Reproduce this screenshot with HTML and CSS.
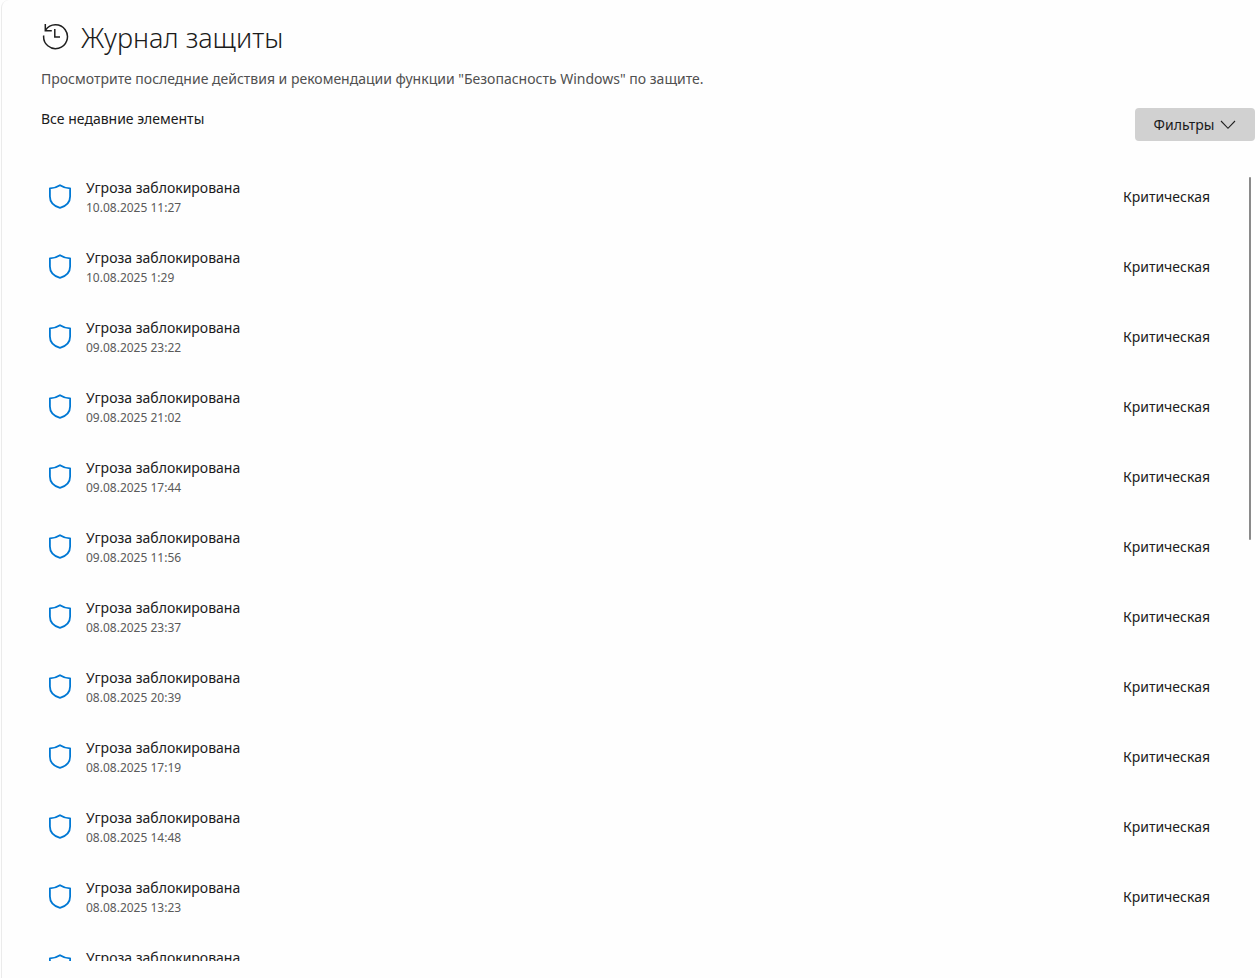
FILE: index.html
```html
<!DOCTYPE html>
<html lang="ru">
<head>
    <meta charset="UTF-8">
    <meta name="viewport" content="width=device-width, initial-scale=1.0">
    <title>Журнал защиты</title>
    <link rel="stylesheet" href="styles.css">
</head>
<body>

    <!-- Shield icon shared by all rows -->
    <svg class="sprite" aria-hidden="true">
        <symbol id="shield" viewBox="0 0 24 26">
            <path d="M12 1.200C9.500 2.900 5.800 4.100 1.900 4.300V12.500C1.900 18.300 5.500 22 12 23.900C18.500 22 22.100 18.300 22.100 12.500V4.300C18.200 4.100 14.500 2.900 12 1.200Z" fill="none" stroke="#0078d4" stroke-width="1.800" stroke-linejoin="round"/>
        </symbol>
    </svg>

    <main class="page">
        <header class="header">
            <svg class="history-icon" viewBox="0 0 28 28" aria-hidden="true">
                <path d="M2.700 13.500A11.900 11.900 0 1 0 4.600 8.200M4.300 2V8.800H10.800M13.800 7V15H19" fill="none" stroke="#1f1f1f" stroke-width="1.500"/>
            </svg>
            <h1 class="title">Журнал защиты</h1>
        </header>
        <p class="description">Просмотрите последние действия и рекомендации функции "Безопасность Windows" по защите.</p>

        <div class="toolbar">
            <h2 class="subtitle">Все недавние элементы</h2>
            <button type="button" class="filter-btn">
                Фильтры
                <svg class="chevron" viewBox="0 0 16 10" aria-hidden="true">
                    <path d="M1 1L8 8.300L15 1" fill="none" stroke="#1f1f1f" stroke-width="1.100"/>
                </svg>
            </button>
        </div>

        <div class="history">
            <ul class="list">
                <li class="item">
                    <svg class="shield"><use href="#shield"/></svg>
                    <div class="info"><span class="name">Угроза заблокирована</span><time class="date">10.08.2025 11:27</time></div>
                    <span class="level">Критическая</span>
                </li>
                <li class="item">
                    <svg class="shield"><use href="#shield"/></svg>
                    <div class="info"><span class="name">Угроза заблокирована</span><time class="date">10.08.2025 1:29</time></div>
                    <span class="level">Критическая</span>
                </li>
                <li class="item">
                    <svg class="shield"><use href="#shield"/></svg>
                    <div class="info"><span class="name">Угроза заблокирована</span><time class="date">09.08.2025 23:22</time></div>
                    <span class="level">Критическая</span>
                </li>
                <li class="item">
                    <svg class="shield"><use href="#shield"/></svg>
                    <div class="info"><span class="name">Угроза заблокирована</span><time class="date">09.08.2025 21:02</time></div>
                    <span class="level">Критическая</span>
                </li>
                <li class="item">
                    <svg class="shield"><use href="#shield"/></svg>
                    <div class="info"><span class="name">Угроза заблокирована</span><time class="date">09.08.2025 17:44</time></div>
                    <span class="level">Критическая</span>
                </li>
                <li class="item">
                    <svg class="shield"><use href="#shield"/></svg>
                    <div class="info"><span class="name">Угроза заблокирована</span><time class="date">09.08.2025 11:56</time></div>
                    <span class="level">Критическая</span>
                </li>
                <li class="item">
                    <svg class="shield"><use href="#shield"/></svg>
                    <div class="info"><span class="name">Угроза заблокирована</span><time class="date">08.08.2025 23:37</time></div>
                    <span class="level">Критическая</span>
                </li>
                <li class="item">
                    <svg class="shield"><use href="#shield"/></svg>
                    <div class="info"><span class="name">Угроза заблокирована</span><time class="date">08.08.2025 20:39</time></div>
                    <span class="level">Критическая</span>
                </li>
                <li class="item">
                    <svg class="shield"><use href="#shield"/></svg>
                    <div class="info"><span class="name">Угроза заблокирована</span><time class="date">08.08.2025 17:19</time></div>
                    <span class="level">Критическая</span>
                </li>
                <li class="item">
                    <svg class="shield"><use href="#shield"/></svg>
                    <div class="info"><span class="name">Угроза заблокирована</span><time class="date">08.08.2025 14:48</time></div>
                    <span class="level">Критическая</span>
                </li>
                <li class="item">
                    <svg class="shield"><use href="#shield"/></svg>
                    <div class="info"><span class="name">Угроза заблокирована</span><time class="date">08.08.2025 13:23</time></div>
                    <span class="level">Критическая</span>
                </li>
                <li class="item">
                    <svg class="shield"><use href="#shield"/></svg>
                    <div class="info"><span class="name">Угроза заблокирована</span></div>
                </li>
            </ul>
            <div class="scroll-thumb"></div>
        </div>
    </main>

</body>
</html>
```
FILE: styles.css
```css
* {
    box-sizing: border-box;
}
body {
    margin: 0;
    font-family: "Segoe UI", "Noto Sans", sans-serif;
    font-size: 14px;
    line-height: 20px;
    color: #1b1b1b;
    background-color: #fefefe;
}
.sprite {
    display: none;
}
.page {
    display: flex;
    flex-direction: column;
    height: 100vh;
    margin-left: 1px;
    padding: 18px 5px 17px 39px;
    border-left: 1px solid #ebebeb;
    border-top-left-radius: 8px;
}
.header {
    display: flex;
    align-items: center;
    gap: 12px;
    height: 40px;
}
.history-icon {
    width: 28px;
    height: 28px;
    margin-bottom: 4px;
}
.title {
    margin: 0;
    font-size: 27px;
    font-weight: 300;
    line-height: 40px;
}
.description {
    margin: 11px 0 0;
    color: #505050;
}
.toolbar {
    display: flex;
    justify-content: space-between;
    align-items: flex-start;
    margin-top: 19px;
}
.subtitle {
    margin: 0;
    font-size: 14px;
    font-weight: 400;
    line-height: 22px;
}
.filter-btn {
    display: flex;
    align-items: center;
    justify-content: center;
    gap: 6px;
    width: 120px;
    height: 33px;
    padding: 0;
    border: none;
    border-radius: 4px;
    background-color: #d1d1d1;
    color: #1b1b1b;
    font-family: inherit;
    font-size: 14px;
    cursor: pointer;
}
.chevron {
    width: 16px;
    height: 10px;
}

/* History list */
.history {
    position: relative;
    flex: 1;
    min-height: 0;
    margin-top: 21px;
    overflow: hidden;
}
.list {
    margin: 0;
    padding: 0 45px 0 7px;
    list-style: none;
}
.item {
    display: flex;
    align-items: center;
    height: 70px;
}
.shield {
    width: 24px;
    height: 26px;
    margin-right: 14px;
}
.info {
    display: flex;
    flex-direction: column;
    flex: 1;
    height: 38px;
}
.date {
    font-size: 12px;
    color: #5a5a5a;
}
.scroll-thumb {
    position: absolute;
    top: 15px;
    right: 4px;
    width: 2px;
    height: 363px;
    border-radius: 1px;
    background-color: #8a8a8a;
}
```
